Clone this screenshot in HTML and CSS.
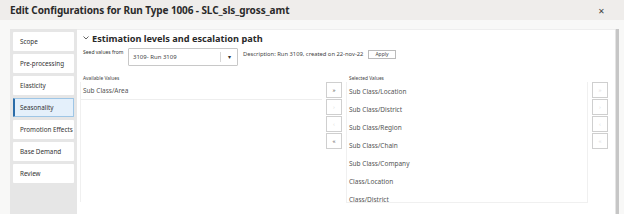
FILE: index.html
```html
<!DOCTYPE html>
<html lang="en">
<head>
    <meta charset="UTF-8">
    <title>Edit Configurations</title>
    <link rel="stylesheet" href="styles.css">
</head>
<body>
    <!-- dialog header -->
    <div class="header">
        <span class="title">Edit Configurations for Run Type 1006 - SLC_sls_gross_amt</span>
        <span class="close">&#x2715;</span>
    </div>

    <div class="main">
        <!-- left steps -->
        <div class="nav">
            <div class="nav-item">Scope</div>
            <div class="nav-item">Pre-processing</div>
            <div class="nav-item">Elasticity</div>
            <div class="nav-item active">Seasonality</div>
            <div class="nav-item">Promotion Effects</div>
            <div class="nav-item">Base Demand</div>
            <div class="nav-item">Review</div>
        </div>

        <div class="content">
            <div class="section-title">
                <svg class="chev" width="6" height="4" viewBox="0 0 6 4"><path d="M0.5 0.5 L3 3 L5.5 0.5" fill="none" stroke="#555" stroke-width="0.9"/></svg>
                Estimation levels and escalation path
            </div>

            <div class="seed-row">
                <span class="seed-label">Seed values from</span>
                <div class="select">
                    <span class="select-text">3109- Run 3109</span>
                    <span class="select-btn">&#x25BE;</span>
                </div>
                <span class="desc">Description: Run 3109, created on 22-nov-22</span>
                <span class="apply">Apply</span>
            </div>

            <div class="shuttle">
                <div class="list-col">
                    <div class="list-label">Available Values</div>
                    <div class="list avail">
                        <div class="list-item first">Sub Class/Area</div>
                    </div>
                </div>

                <div class="btn-col">
                    <div class="sbtn">&raquo;</div>
                    <div class="sbtn light">&rsaquo;</div>
                    <div class="sbtn light">&lsaquo;</div>
                    <div class="sbtn">&laquo;</div>
                </div>

                <div class="list-col">
                    <div class="list-label">Selected Values</div>
                    <div class="list selected">
                        <div class="list-item">Sub Class/Location</div>
                        <div class="list-item">Sub Class/District</div>
                        <div class="list-item">Sub Class/Region</div>
                        <div class="list-item">Sub Class/Chain</div>
                        <div class="list-item">Sub Class/Company</div>
                        <div class="list-item">Class/Location</div>
                        <div class="list-item">Class/District</div>
                    </div>
                </div>

                <div class="btn-col order">
                    <div class="sbtn light">&raquo;</div>
                    <div class="sbtn light">&rsaquo;</div>
                    <div class="sbtn light">&lsaquo;</div>
                    <div class="sbtn light">&laquo;</div>
                </div>
            </div>
        </div>
        <div class="scrollbar"></div>
    </div>
</body>
</html>
```

FILE: styles.css
```css
html, body {
    margin: 0;
    height: 100%;
    overflow: hidden;
}
body {
    font-family: "Noto Sans", "Open Sans", sans-serif;
    background: #f8f8f7;
    color: #333;
}

.header {
    height: 20px;
    background: #efedeb;
    display: flex;
    align-items: center;
    justify-content: space-between;
    padding: 0 19px 0 10px;
}
.title {
    font-size: 10px;
    font-weight: bold;
    color: #2a2a2a;
    letter-spacing: -0.1px;
}
.close {
    font-size: 8px;
    color: #444;
}

.main {
    display: flex;
    padding: 9px 0 0 10px;
    height: calc(100% - 29px);
}

.nav {
    width: 61px;
    background: #e6e6e6;
    padding: 3px 3px 0 3px;
    display: flex;
    flex-direction: column;
    gap: 3px;
}
.nav-item {
    height: 19px;
    background: #fff;
    font-size: 6.3px;
    color: #333;
    display: flex;
    align-items: center;
    padding-left: 7px;
    white-space: nowrap;
    border-radius: 1px;
}
.nav-item.active {
    background: #e4f0fb;
    border: 1px solid #9ec6e6;
    border-left: 2px solid #2b6ca8;
    padding-left: 5px;
    height: 17px;
}

.content {
    width: 535px;
    background: #fff;
    padding-left: 3px;
    border-top: 1px solid #eeeeee;
}
.section-title {
    font-size: 9.2px;
    font-weight: bold;
    color: #2a2a2a;
    margin: 1px 0 0 3px;
    height: 14px;
    display: flex;
    align-items: center;
}
.chev {
    margin: 0 3px 0 0;
}

.seed-row {
    display: flex;
    align-items: flex-start;
    margin: 3px 0 0 3px;
    height: 18px;
}
.seed-label {
    font-size: 5px;
    color: #333;
    width: 45px;
    padding-top: 1px;
}
.select {
    width: 108px;
    height: 16px;
    border: 1px solid #c8c8c8;
    display: flex;
    align-items: center;
    border-radius: 1px;
}
.select-text {
    flex: 1;
    font-size: 6px;
    color: #444;
    padding-left: 4px;
}
.select-btn {
    width: 16px;
    border-left: 1px solid #d6d6d6;
    height: 10px;
    font-size: 6px;
    text-align: center;
    line-height: 10px;
    color: #333;
}
.desc {
    font-size: 5.8px;
    color: #444;
    margin: 2px 0 0 5px;
}
.apply {
    font-size: 5px;
    color: #444;
    border: 1px solid #bbb;
    padding: 0 6px;
    height: 7px;
    line-height: 7px;
    margin: 2px 0 0 5px;
}

.shuttle {
    display: grid;
    grid-template-columns: 242px 16px 242px 16px;
    column-gap: 4px;
    margin-top: 9px;
}
.list-col {
    display: flex;
    flex-direction: column;
}
.list-label {
    font-size: 4.8px;
    color: #444;
    height: 7px;
    padding-left: 3px;
}
.list {
    height: 120px;
    border-left: 1px solid #f0f0f0;
}
.list.selected {
    border-right: 1px solid #f0f0f0;
    border-bottom: 1px solid #f0f0f0;
}
.list-item {
    height: 18px;
    display: flex;
    align-items: center;
    padding-left: 2px;
    font-size: 6.5px;
    color: #555;
}
.list-item.first {
    border-bottom: 1px solid #eeeeee;
    height: 17px;
}

.btn-col {
    display: flex;
    flex-direction: column;
    gap: 1px;
    padding-top: 7px;
}
.sbtn {
    height: 14px;
    border: 1px solid #cfcfcf;
    background: #fff;
    font-size: 6px;
    color: #555;
    display: flex;
    align-items: center;
    justify-content: center;
}
.sbtn.light {
    color: #ddd;
}

.scrollbar {
    width: 3px;
    background: #c6c6c6;
    border-left: 1px solid #e4e4e4;
}
```
